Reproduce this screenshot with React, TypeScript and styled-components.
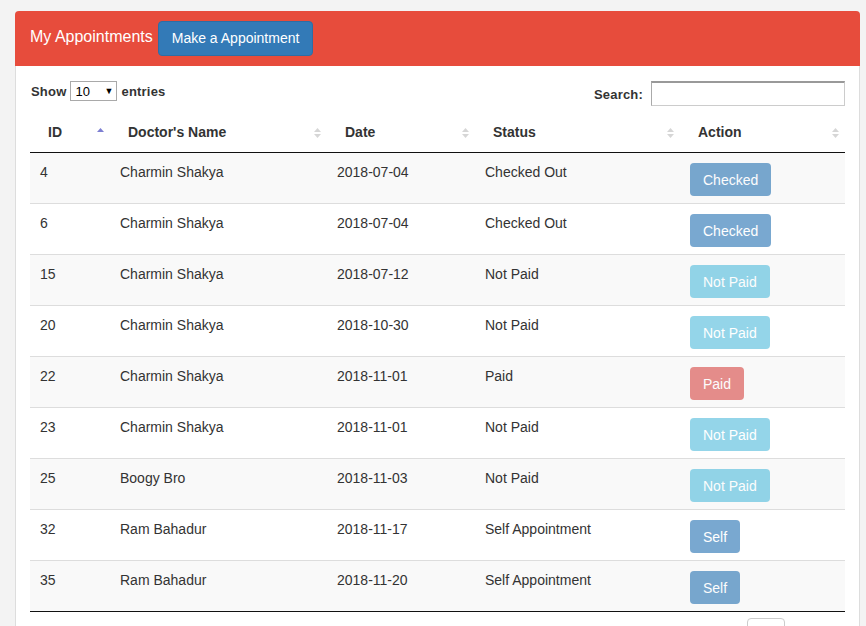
import styled, { createGlobalStyle } from 'styled-components';

const GlobalStyle = createGlobalStyle`
  html, body {
    margin: 0;
    padding: 0;
    background: #f3f3f3;
    font-family: "Liberation Sans", Arial, Helvetica, sans-serif;
    font-size: 14px;
    color: #333;
  }
`;

type Variant = 'checked' | 'info' | 'danger' | 'self';

interface Appointment {
  id: number;
  doctor: string;
  date: string;
  status: string;
  action: string;
  variant: Variant;
}

const appointments: Appointment[] = [
  { id: 4, doctor: 'Charmin Shakya', date: '2018-07-04', status: 'Checked Out', action: 'Checked', variant: 'checked' },
  { id: 6, doctor: 'Charmin Shakya', date: '2018-07-04', status: 'Checked Out', action: 'Checked', variant: 'checked' },
  { id: 15, doctor: 'Charmin Shakya', date: '2018-07-12', status: 'Not Paid', action: 'Not Paid', variant: 'info' },
  { id: 20, doctor: 'Charmin Shakya', date: '2018-10-30', status: 'Not Paid', action: 'Not Paid', variant: 'info' },
  { id: 22, doctor: 'Charmin Shakya', date: '2018-11-01', status: 'Paid', action: 'Paid', variant: 'danger' },
  { id: 23, doctor: 'Charmin Shakya', date: '2018-11-01', status: 'Not Paid', action: 'Not Paid', variant: 'info' },
  { id: 25, doctor: 'Boogy Bro', date: '2018-11-03', status: 'Not Paid', action: 'Not Paid', variant: 'info' },
  { id: 32, doctor: 'Ram Bahadur', date: '2018-11-17', status: 'Self Appointment', action: 'Self', variant: 'self' },
  { id: 35, doctor: 'Ram Bahadur', date: '2018-11-20', status: 'Self Appointment', action: 'Self', variant: 'self' },
];

const columns = [
  { label: 'ID', width: 80, active: true },
  { label: "Doctor's Name", width: 217 },
  { label: 'Date', width: 148 },
  { label: 'Status', width: 205 },
  { label: 'Action', width: 165 },
];

const variantColors: Record<Variant, string> = {
  checked: '#337ab7',
  self: '#337ab7',
  info: '#5bc0de',
  danger: '#d9534f',
};

const Page = styled.div`
  padding: 11px 6px 0 15px;
  height: 615px;
  overflow: hidden;
`;

const Panel = styled.div`
  background: #fff;
  border: 1px solid #ddd;
  border-top: none;
  border-radius: 4px 4px 0 0;
`;

const PanelHeading = styled.div`
  display: flex;
  align-items: center;
  gap: 5px;
  height: 55px;
  padding: 0 15px;
  margin: 0 -1px;
  background: #e74c3c;
  border-radius: 4px 4px 0 0;
`;

const PanelTitle = styled.span`
  color: #fff;
  font-size: 16px;
  margin-top: -4px;
`;

const PrimaryButton = styled.button`
  font-family: inherit;
  font-size: 14px;
  line-height: 20px;
  padding: 6px 13px 7px;
  color: #fff;
  background: #337ab7;
  border: 1px solid #2e6da4;
  border-radius: 4px;
`;

const PanelBody = styled.div`
  padding: 14px 14px 0 14px;
`;

const Toolbar = styled.div`
  display: flex;
  justify-content: space-between;
  align-items: flex-start;
  font-weight: bold;
  font-size: 13px;
  letter-spacing: 0.2px;
`;

const LengthControl = styled.label`
  display: flex;
  align-items: center;
  gap: 4px;
  margin-top: 1px;
  padding-left: 1px;
`;

const Select = styled.div`
  display: flex;
  align-items: center;
  justify-content: space-between;
  width: 38px;
  height: 18px;
  padding: 0 3px 0 4px;
  border: 1px solid #a9a9a9;
  font-weight: normal;
  font-size: 13px;
  letter-spacing: 0;
  color: #000;
  background: #fff;
`;

const Caret = styled.span`
  font-size: 9px;
`;

const SearchControl = styled.label`
  display: flex;
  align-items: center;
  gap: 8px;
  margin-top: 1px;
  padding-top: 2px;
`;

const SearchInput = styled.input`
  box-sizing: border-box;
  width: 194px;
  height: 25px;
  margin-top: -2px;
  padding: 0 2px;
  border: 1px solid #ccc;
  border-top: 2px solid #999;
  border-left-color: #aaa;
  font-family: inherit;
`;

const Table = styled.table`
  width: 100%;
  margin-top: 6px;
  border-collapse: collapse;
  table-layout: fixed;
`;

const HeadCell = styled.th<{ $width: number }>`
  box-sizing: border-box;
  position: relative;
  width: ${({ $width }) => $width}px;
  padding: 10px 18px;
  line-height: 20px;
  text-align: left;
  font-weight: bold;
  border-bottom: 1px solid #111;
`;

// DataTables 정렬 화살표: 셀 우측에 겹쳐 표시
const SortIcon = styled.svg`
  position: absolute;
  right: 5px;
  top: 15px;
`;

const Row = styled.tr<{ $striped: boolean }>`
  background: ${({ $striped }) => ($striped ? '#f9f9f9' : '#fff')};
  border-top: 1px solid #ddd;
  &:first-child {
    border-top: none;
  }
  &:last-child {
    border-bottom: 1px solid #111;
  }
`;

const Cell = styled.td`
  padding: 9px 10px 7px;
  line-height: 20px;
  vertical-align: top;
`;

const ActionButton = styled.button<{ $variant: Variant }>`
  display: inline-block;
  margin-top: 1px;
  height: 33px;
  padding: 0 12px;
  font-family: inherit;
  font-size: 14px;
  color: #fff;
  background: ${({ $variant }) => variantColors[$variant]};
  border: 1px solid transparent;
  border-radius: 4px;
  opacity: 0.65;
`;

const Footer = styled.div`
  display: flex;
  justify-content: flex-end;
  margin-top: 6px;
  padding-right: 5px;
`;

const PageLink = styled.span<{ $boxed?: boolean }>`
  padding: 6px ${({ $boxed }) => ($boxed ? '14px' : '12px')};
  line-height: 20px;
  color: ${({ $boxed }) => ($boxed ? '#333' : '#777')};
  border: 1px solid ${({ $boxed }) => ($boxed ? '#ccc' : 'transparent')};
  border-radius: 4px;
`;

const SortGlyph = ({ active }: { active?: boolean }) =>
  active ? (
    <SortIcon width="9" height="12" viewBox="0 0 9 12">
      <path d="M4.5 1 L8 5 L1 5 Z" fill="#7d7fd2" />
    </SortIcon>
  ) : (
    <SortIcon width="9" height="12" viewBox="0 0 9 12">
      <path d="M4.5 1 L8 5 L1 5 Z" fill="#d6d6d6" />
      <path d="M4.5 11 L8 7 L1 7 Z" fill="#d6d6d6" />
    </SortIcon>
  );

const App = () => {
  return (
    <>
      <GlobalStyle />
      <Page>
        <Panel>
          <PanelHeading>
            <PanelTitle>My Appointments</PanelTitle>
            <PrimaryButton>Make a Appointment</PrimaryButton>
          </PanelHeading>

          <PanelBody>
            <Toolbar>
              <LengthControl>
                Show
                <Select>
                  10 <Caret>▼</Caret>
                </Select>
                entries
              </LengthControl>
              <SearchControl>
                Search:
                <SearchInput type="search" />
              </SearchControl>
            </Toolbar>

            <Table>
              <thead>
                <tr>
                  {columns.map((col) => (
                    <HeadCell key={col.label} $width={col.width}>
                      {col.label}
                      <SortGlyph active={col.active} />
                    </HeadCell>
                  ))}
                </tr>
              </thead>
              <tbody>
                {appointments.map((item, index) => (
                  <Row key={item.id} $striped={index % 2 === 0}>
                    <Cell>{item.id}</Cell>
                    <Cell>{item.doctor}</Cell>
                    <Cell>{item.date}</Cell>
                    <Cell>{item.status}</Cell>
                    <Cell>
                      <ActionButton $variant={item.variant}>{item.action}</ActionButton>
                    </Cell>
                  </Row>
                ))}
              </tbody>
            </Table>

            <Footer>
              <PageLink>Previous</PageLink>
              <PageLink $boxed>1</PageLink>
              <PageLink>Next</PageLink>
            </Footer>
          </PanelBody>
        </Panel>
      </Page>
    </>
  );
};

export default App;
